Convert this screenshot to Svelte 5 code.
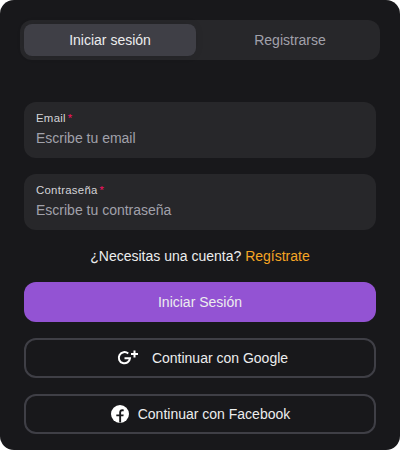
<script>
  let selected = $state('login');
  const tabs = [
    { id: 'login', label: 'Iniciar sesión' },
    { id: 'register', label: 'Registrarse' }
  ];
  const fields = [
    { id: 'email', type: 'email', label: 'Email', placeholder: 'Escribe tu email' },
    { id: 'password', type: 'password', label: 'Contraseña', placeholder: 'Escribe tu contraseña' }
  ];
</script>

<main class="card">
  <div class="tabs" role="tablist">
    {#each tabs as tab}
      <button
        class="tab"
        class:active={selected === tab.id}
        role="tab"
        aria-selected={selected === tab.id}
        onclick={() => (selected = tab.id)}
      >{tab.label}</button>
    {/each}
  </div>

  <form class="form" onsubmit={(e) => e.preventDefault()}>
    {#each fields as field}
      <div class="field">
        <label for={field.id}>{field.label}<span class="required">*</span></label>
        <input id={field.id} type={field.type} placeholder={field.placeholder} />
      </div>
    {/each}

    <p class="hint">¿Necesitas una cuenta? <a href="#register">Regístrate</a></p>

    <button class="btn primary" type="submit">Iniciar Sesión</button>

    <button class="btn bordered" type="button">
      <svg width="32" height="24" viewBox="0 0 32 24" fill="none" stroke="#fff" aria-hidden="true">
        <path d="M16.2 7.6A5.6 5.6 0 1 0 18 12.2H12.5" stroke-width="2" />
        <path d="M22.5 4.5v7M19 8h7" stroke-width="2" />
      </svg>
      Continuar con Google
    </button>

    <button class="btn bordered" type="button">
      <svg width="20" height="20" viewBox="0 0 20 20" aria-hidden="true">
        <circle cx="10" cy="10" r="9" fill="#fff" />
        <path d="M9.2 18.5v-6.3H6.3v-1.7h2.9V8.6c0-2.1 1.2-3.3 3-3.3.6 0 1.1.1 1.5.2v1.7h-1.1c-1 0-1.5.5-1.5 1.4v1.9h2.6l-.3 1.7h-2.3v6.3z" fill="#18181b" />
      </svg>
      Continuar con Facebook
    </button>
  </form>
</main>

<style>
  :global(body) {
    background: #fff;
  }

  .card {
    box-sizing: border-box;
    width: 400px;
    height: 450px;
    padding: 20px;
    border-radius: 14px;
    background: #18181b;
    color: #ecedee;
    font: 14px/20px "Liberation Sans", Arial, sans-serif;
  }

  button,
  input {
    font: inherit;
    color: inherit;
    border: 0;
    margin: 0;
    padding: 0;
    background: none;
    outline: none;
  }

  button {
    cursor: pointer;
  }

  .tabs {
    display: flex;
    gap: 8px;
    padding: 4px;
    height: 32px;
    border-radius: 12px;
    background: #27272a;
  }

  .tab {
    flex: 1;
    border-radius: 8px;
    color: #a1a1aa;
  }

  .tab.active {
    background: #3f3f46;
    color: #ecedee;
    box-shadow: 0 0 8px rgba(0, 0, 0, 0.08);
  }

  .form {
    display: flex;
    flex-direction: column;
    gap: 16px;
    padding: 42px 4px 0;
  }

  .field {
    box-sizing: border-box;
    height: 56px;
    padding: 8px 12px;
    display: flex;
    flex-direction: column;
    border-radius: 12px;
    background: #27272a;
  }

  label {
    font-size: 11.4px;
    line-height: 17px;
    letter-spacing: 0.27px;
    color: #d4d4d8;
  }

  .required {
    margin-left: 2px;
    color: #f31260;
  }

  input {
    height: 20px;
    margin-top: 1px;
  }

  input::placeholder {
    color: #a1a1aa;
    opacity: 1;
  }

  .hint {
    margin: 0;
    text-align: center;
  }

  .hint a {
    color: #f5a524;
    text-decoration: none;
  }

  .btn {
    box-sizing: border-box;
    height: 40px;
    display: flex;
    align-items: center;
    justify-content: center;
    gap: 8px;
    border-radius: 12px;
  }

  .primary {
    background: #9353d3;
  }

  .bordered {
    border: 2px solid #3f3f46;
  }
</style>
